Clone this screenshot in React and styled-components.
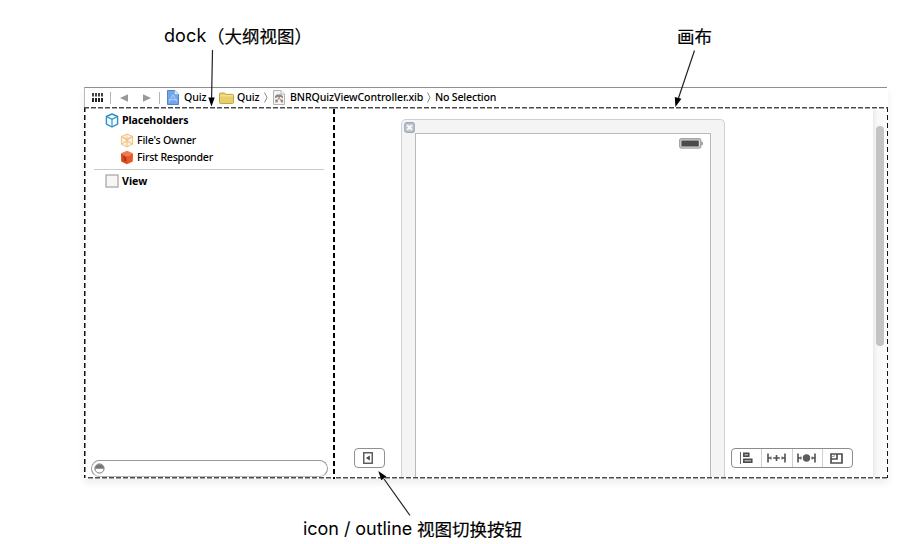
import React from "react";
import styled, { createGlobalStyle, css } from "styled-components";

const Global = createGlobalStyle`
  * { box-sizing: border-box; }
  body { margin: 0; background: #fff; }
`;

const dashH = (c) => `repeating-linear-gradient(90deg, ${c} 0 5px, transparent 5px 7px)`;
const dashV = (c) => `repeating-linear-gradient(180deg, ${c} 0 5px, transparent 5px 8px)`;

const Page = styled.main`
  position: relative;
  width: 924px;
  height: 544px;
  overflow: hidden;
  display: flex;
  flex-direction: column;
  color: #000;
  font-family: "Noto Sans", "Noto Sans CJK SC", sans-serif;
`;

const Captions = styled.header`
  height: 87px;
  display: flex;
  padding: 23px 0 0 164px;
`;

const Caption = styled.div`
  display: flex;
  align-items: center;
  height: 26px;
  line-height: 26px;
  white-space: pre;
  width: ${(p) => p.$width || "auto"};
`;

const Latin = styled.span`
  flex: none;
  width: ${(p) => p.$w}px;
  font: 400 18px/26px Inter, sans-serif;
  letter-spacing: ${(p) => p.$track || "0"};
`;

const Han = styled.span`
  font: 400 17.5px/26px "Noto Sans CJK SC", sans-serif;
  -webkit-text-stroke: 0.2px #000;
  margin-left: ${(p) => p.$gap || "0"};
`;

const Editor = styled.section`
  width: 804px;
  height: 392px;
  margin-left: 84px;
  display: flex;
  flex-direction: column;
  box-shadow: 0 4px 7px rgba(0, 0, 0, 0.07);
`;

const JumpBar = styled.nav`
  height: 20px;
  width: 803px;
  border-top: 1px solid #8e8e8e;
  border-left: 1px solid #bbb;
  display: flex;
  align-items: center;
  padding-left: 7px;
`;

const Glyph = styled.svg`
  display: block;
  flex: none;
  width: ${(p) => p.$w}px;
  height: ${(p) => p.$h}px;
  margin-left: ${(p) => p.$gap || 0}px;
`;

const Separator = styled.i`
  width: 1px;
  height: 12px;
  background: #b5b5b5;
  margin-left: ${(p) => p.$gap}px;
`;

const Label = styled.span`
  display: block;
  flex: none;
  width: ${(p) => (p.$w ? `${p.$w}px` : "auto")};
  margin-left: ${(p) => p.$gap || 0}px;
  font: ${(p) => (p.$bold ? 700 : 500)} 10.6px/16px "Noto Sans", sans-serif;
  letter-spacing: ${(p) => p.$track || 0}px;
  white-space: nowrap;
`;

const BarLabel = styled(Label)`
  margin-bottom: 1px;
`;

const Panels = styled.div`
  height: 372px;
  display: flex;
`;

const edges = css`
  background-repeat: no-repeat;
`;

const Dock = styled.aside`
  ${edges}
  width: 249px;
  height: 372px;
  display: flex;
  flex-direction: column;
  background-image: ${dashH("#4c4c4c")}, ${dashH("#4c4c4c")}, ${dashV("#111")};
  background-size: 249px 1.5px, 249px 1.5px, 1.5px 371px;
  background-position: 0 0, 4px 370px, 0 0;
  padding: 4px 6px 2px 6px;
`;

const TreeRow = styled.div`
  display: flex;
  align-items: center;
  height: ${(p) => p.$h}px;
  padding-left: ${(p) => p.$indent}px;
`;

const TreeRule = styled.hr`
  width: 230px;
  height: 1px;
  border: 0;
  margin: 6px 0 2px 4px;
  background: #cacaca;
`;

const Filter = styled.div`
  width: 237px;
  height: 17px;
  margin-top: auto;
  margin-left: 1px;
  border: 1px solid #999;
  border-bottom-color: #b5b5b5;
  border-radius: 9px;
  padding: 2px 0 0 2px;
`;

const Canvas = styled.section`
  ${edges}
  width: 555px;
  height: 372px;
  display: flex;
  background-image: ${dashH("#4c4c4c")}, ${dashH("#4c4c4c")}, ${dashV("#000")}, ${dashV("#111")};
  background-size: 555px 1.5px, 555px 1.5px, 2px 371px, 1.5px 371px;
  background-position: 0 0, 3px 370px, 0 2px, 554px 0;
`;

const LeftGutter = styled.div`
  width: 68px;
  padding: 341px 0 0 21px;
`;

const Toggle = styled.button`
  display: flex;
  align-items: center;
  justify-content: center;
  width: 31px;
  height: 20px;
  padding: 0 3px 0 0;
  border: 1px solid #909090;
  border-radius: 4px;
  background: #fff;
`;

const Device = styled.div`
  width: 324px;
  height: 358px;
  margin-top: 12px;
  border: 1.5px solid #cfd2d4;
  border-bottom: 0;
  border-radius: 5px 5px 0 0;
  background: #f4f4f4;
  padding: 0 13px;
`;

const DeviceTitle = styled.div`
  height: 13px;
  display: flex;
  margin-left: -11px;
  padding-top: 2px;
`;

const Screen = styled.div`
  height: 344px;
  border: 1px solid #b9babb;
  border-bottom: 0;
  background: #fff;
  display: flex;
  justify-content: flex-end;
  padding: 4px 7px 0 0;
`;

const RightGutter = styled.div`
  width: 148px;
  padding: 341px 0 0 6px;
`;

const Tools = styled.div`
  display: flex;
  width: 122px;
  height: 20px;
  border: 1px solid #8c8c8c;
  border-radius: 4px;
  background: #fff;
`;

const Tool = styled.button`
  flex: 1;
  display: flex;
  align-items: center;
  justify-content: center;
  border: 0;
  border-right: 1px solid #d0d0d0;
  padding: 0 1px 0 0;
  background: transparent;
  &:last-child { border-right: 0; }
`;

const ScrollTrack = styled.div`
  width: 13px;
  height: 367px;
  margin-top: 3px;
  padding: 16px 0 0 3px;
  background: linear-gradient(90deg, #e9e9e9, #f8f8f8 4px, #fbfbfb);
`;

const Thumb = styled.div`
  width: 8px;
  height: 220px;
  border-radius: 4px;
  background: #c3c3c3;
`;

const Footer = styled.footer`
  padding: 37px 0 0 303px;
`;

const Arrows = styled.svg`
  position: absolute;
  inset: 0;
  pointer-events: none;
`;

const Chevron = ({ gap }) => (
  <Glyph $w={4} $h={11} $gap={gap} viewBox="0 0 4 11">
    <path d="M.5 .5 3 5.5 .5 10.5" fill="none" stroke="#8b8b8b" />
  </Glyph>
);

const GridIcon = () => (
  <Glyph $w={11} $h={9} viewBox="0 0 11 9">
    {[0, 3, 6, 9].map((x) => (
      <g key={x} fill="#444">
        <rect x={x} y="0" width="2" height="3.5" />
        <rect x={x} y="5" width="2" height="4" fill="#222" />
      </g>
    ))}
  </Glyph>
);

const ProjectIcon = () => (
  <Glyph $w={12} $h={15} $gap={7} viewBox="0 0 12 15">
    <path d="M.5.5h7.3l3.7 3.7v10.3H.5z" fill="#70a7ea" stroke="#5283cb" />
    <path d="M7.8.5v3.7h3.7z" fill="#dcecff" />
    <path d="M2.3 11.7 6 4.8l3.7 6.9M1.8 9.7h8.4" fill="none" stroke="#b0d0fa" />
  </Glyph>
);

const FolderIcon = () => (
  <Glyph $w={15} $h={12} $gap={13} viewBox="0 0 15 12">
    <path d="M.5 2q0-1 1-1h4l1 1.3h7q1 0 1 1v7.2q0 1-1 1h-12q-1 0-1-1z" fill="#e8cf6d" stroke="#c4a644" />
    <path d="M1.2 3.8h12.6" stroke="#f8e99d" />
  </Glyph>
);

const XibIcon = () => (
  <Glyph $w={12} $h={15} $gap={5} viewBox="0 0 12 15">
    <path d="M.5.5h7.5l3.5 3.6v10.4H.5z" fill="#f4f4f4" stroke="#b4b4b4" />
    <path d="M8 .5v3.6h3.5" fill="#fff" stroke="#b4b4b4" />
    <path d="M2 8V6l2-1.5h4L10 6.5V8H8.5V7h-5v1z" fill="#8d8884" />
    <path d="m4 12 2-5 2.5 5" fill="none" stroke="#b98b74" />
    <path d="M2.3 9.5h2v3h-2zM8 9.5h2v3H8z" fill="#909090" />
  </Glyph>
);

const CubeOutline = ({ size, gap, color, pale }) => (
  <Glyph $w={size} $h={size + 1} $gap={gap} viewBox="0 0 14 15">
    <path d="m7 1 5.6 2.5v7.6L7 14l-5.6-2.9V3.5z" fill={pale ? "#fff1da" : "#f5fcff"} stroke={color} strokeWidth={pale ? 1 : 1.4} strokeLinejoin="round" />
    <path d="M1.4 3.5 7 6.3l5.6-2.8M7 6.3V14" fill="none" stroke={color} strokeWidth="1.1" />
    {pale && <path d="M1.4 11.1 7 8.3l5.6 2.8M7 1v7.3M1.4 3.5l11.2 7.6M12.6 3.5 1.4 11.1" fill="none" stroke={color} strokeWidth=".7" />}
  </Glyph>
);

const RedCube = () => (
  <Glyph $w={14} $h={15} viewBox="0 0 14 15">
    <path d="m7 .8 6 2.5-6 3-6-3z" fill="#f27a49" />
    <path d="m1 3.3 6 3v8L1.2 11.4z" fill="#d9481d" />
    <path d="m13 3.3-6 3v8l5.8-2.9z" fill="#e95829" />
    <path d="M3.4 7.2 5 8v3" fill="none" stroke="#8f2610" />
  </Glyph>
);

const ViewIcon = () => (
  <Glyph $w={14} $h={14} viewBox="0 0 14 14">
    <rect x="1" y="1" width="12" height="12" fill="#f6f6f6" stroke="#b4b4b4" strokeWidth="1.5" />
  </Glyph>
);

const FilterIcon = () => (
  <Glyph $w={11} $h={11} viewBox="0 0 11 11">
    <circle cx="5.5" cy="5.5" r="4.6" fill="#fff" stroke="#777" />
    <path d="M1 5.7a4.5 4.5 0 0 1 9 0z" fill="#777" />
  </Glyph>
);

const ToggleIcon = () => (
  <Glyph $w={10} $h={12} viewBox="0 0 10 12">
    <rect x=".75" y=".75" width="8.5" height="10.5" fill="none" stroke="#555" strokeWidth="1.4" />
    <path d="M6.8 3.5v5L2.9 6z" fill="#444" />
  </Glyph>
);

const CloseIcon = () => (
  <Glyph $w={11} $h={11} viewBox="0 0 11 11">
    <rect x=".75" y=".75" width="9.5" height="9.5" rx="2" fill="#c3cbd6" stroke="#a0aab6" strokeWidth="1.3" />
    <path d="m3.2 3.2 4.6 4.6m0-4.6L3.2 7.8" stroke="#fff" strokeWidth="1.6" />
  </Glyph>
);

const Battery = () => (
  <Glyph $w={24} $h={11} viewBox="0 0 24 11">
    <rect x=".7" y=".7" width="21" height="9.4" rx="2" fill="#ddd" stroke="#a4a4a4" strokeWidth="1.4" />
    <rect x="2.4" y="2.4" width="17.4" height="6" rx=".5" fill="#4b4b4b" />
    <path d="M22.3 3.4q1.6.2 1.6 2t-1.6 2z" fill="#8a8a8a" />
  </Glyph>
);

const AlignIcon = () => (
  <Glyph $w={13} $h={12} viewBox="0 0 13 12">
    <path d="M.5 0v12" stroke="#666" />
    <path d="M3.8 1.2h5v3h-5zM3.8 7.2h8v3h-8z" fill="#aaa" stroke="#4b4b4b" strokeWidth="1.5" />
  </Glyph>
);

const PinIcon = () => (
  <Glyph $w={19} $h={10} viewBox="0 0 19 10">
    <path d="M1 .5v9M18 .5v9M1 5h3M15 5h3M6.2 5h6.6M9.5 2v6" stroke="#505050" strokeWidth="1.6" />
    <path d="M4 3.5v3M15 3.5v3" stroke="#505050" />
  </Glyph>
);

const ResolveIcon = () => (
  <Glyph $w={19} $h={10} viewBox="0 0 19 10">
    <path d="M1 .5v9M18 .5v9M1 5h3M15 5h3" stroke="#505050" strokeWidth="1.6" />
    <path d="M4 3.5v3M15 3.5v3" stroke="#505050" />
    <circle cx="9.5" cy="5" r="3.7" fill="#5c5c5c" />
  </Glyph>
);

const ResizeIcon = () => (
  <Glyph $w={13} $h={11} viewBox="0 0 13 11">
    <path d="M1 1h11v9H1zM1 6h6V1" fill="none" stroke="#505050" strokeWidth="1.7" />
    <path d="M4.2 1v2.5H1" fill="none" stroke="#777" strokeWidth=".7" />
  </Glyph>
);

export default function App() {
  return (
    <Page>
      <Global />
      <Captions>
        <Caption $width="513px">
          <Latin $w={43} $track="0.1px">dock</Latin>
          <Han>（大纲视图）</Han>
        </Caption>
        <Caption><Han>画布</Han></Caption>
      </Captions>
      <Editor>
        <JumpBar>
          <GridIcon />
          <Separator $gap={7} />
          <Glyph $w={8} $h={8} $gap={9} viewBox="0 0 8 8"><path d="M8 .3v7.4L0 4z" fill="#999" /></Glyph>
          <Glyph $w={8} $h={8} $gap={15} viewBox="0 0 8 8"><path d="M0 .3v7.4L8 4z" fill="#999" /></Glyph>
          <Separator $gap={8} />
          <ProjectIcon />
          <BarLabel $gap={5} $w={22} $track={-0.1}>Quiz</BarLabel>
          <FolderIcon />
          <BarLabel $gap={3} $w={22} $track={-0.1}>Quiz</BarLabel>
          <Chevron gap={5} />
          <XibIcon />
          <BarLabel $gap={5} $w={133} $track={-0.1}>BNRQuizViewController.xib</BarLabel>
          <Chevron gap={4} />
          <BarLabel $gap={4} $track={-0.2}>No Selection</BarLabel>
        </JumpBar>
        <Panels>
          <Dock>
            <TreeRow $h={18} $indent={15}>
              <CubeOutline size={14} color="#2a8fc6" />
              <Label $bold $gap={3} $track={-0.1}>Placeholders</Label>
            </TreeRow>
            <TreeRow $h={22} $indent={30}>
              <CubeOutline size={14} color="#efc088" pale />
              <Label $gap={3} $track={-0.2}>File's Owner</Label>
            </TreeRow>
            <TreeRow $h={12} $indent={30}>
              <RedCube />
              <Label $gap={3} $track={-0.25}>First Responder</Label>
            </TreeRow>
            <TreeRule />
            <TreeRow $h={18} $indent={15}>
              <ViewIcon />
              <Label $bold $gap={3}>View</Label>
            </TreeRow>
            <Filter><FilterIcon /></Filter>
          </Dock>
          <Canvas>
            <LeftGutter>
              <Toggle><ToggleIcon /></Toggle>
            </LeftGutter>
            <Device>
              <DeviceTitle><CloseIcon /></DeviceTitle>
              <Screen><Battery /></Screen>
            </Device>
            <RightGutter>
              <Tools>
                <Tool><AlignIcon /></Tool>
                <Tool><PinIcon /></Tool>
                <Tool><ResolveIcon /></Tool>
                <Tool><ResizeIcon /></Tool>
              </Tools>
            </RightGutter>
            <ScrollTrack><Thumb /></ScrollTrack>
          </Canvas>
        </Panels>
      </Editor>
      <Footer>
        <Caption>
          <Latin $w={109} $track="-0.05px">icon / outline</Latin>
          <Han $gap="5px">视图切换按钮</Han>
        </Caption>
      </Footer>
      <Arrows width="924" height="544" viewBox="0 0 924 544">
        <path d="M212.5 50 211.6 98M694.5 50.5 678.5 98M410 515.5 384 479" fill="none" stroke="#222" strokeWidth="1.2" />
        <path d="M208.3 97.5h6.4l-3.2 9zM674.8 97l6.6 1.8-6 8.2zM378.3 471l8 5.5-5 3.8z" fill="#000" />
      </Arrows>
    </Page>
  );
}
